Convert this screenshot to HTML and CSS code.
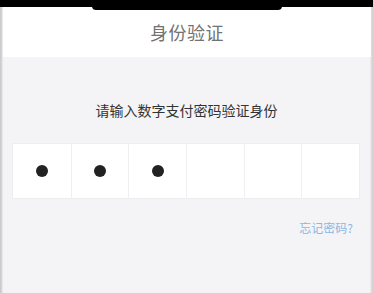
FILE: index.html
```html
<!DOCTYPE html>
<html lang="zh">
<head>
<meta charset="utf-8">
<title>身份验证</title>
<link rel="stylesheet" href="styles.css">
</head>
<body>
<div class="screen">
  <div class="topbar"><div class="notch"></div></div>
  <div class="header"><span class="title">身份验证</span></div>
  <p class="prompt">请输入数字支付密码验证身份</p>
  <div class="pinbox">
    <div class="cell"><span class="dot"></span></div>
    <div class="cell"><span class="dot"></span></div>
    <div class="cell"><span class="dot"></span></div>
    <div class="cell"></div>
    <div class="cell"></div>
    <div class="cell"></div>
  </div>
  <div class="forgot-row"><a class="forgot">忘记密码?</a></div>
</div>
</body>
</html>
```
FILE: styles.css
```css
html, body {
  margin: 0;
  padding: 0;
}
body {
  font-family: "Noto Sans CJK SC", "Noto Sans", sans-serif;
  background: #f4f3f6;
}
.screen {
  position: relative;
  width: 373px;
  height: 293px;
  box-sizing: border-box;
  border-top: 7px solid #000;
  background: #f4f3f6;
  overflow: hidden;
  box-shadow: inset 3px 0 2px -1px rgba(0,0,0,0.18), inset -4px 0 2px -2px rgba(0,0,0,0.14);
}
.topbar {
  position: relative;
  height: 0;
}
.notch {
  position: absolute;
  left: 92px;
  width: 190px;
  top: -1px;
  height: 4px;
  background: #000;
  border-radius: 0 0 8px 8px;
}
.header {
  height: 50px;
  background: #fff;
  display: flex;
  align-items: center;
  justify-content: center;
  margin: 0 2px 0 3px;
}
.title {
  font-size: 18px;
  color: #727272;
  letter-spacing: 0.5px;
}
.prompt {
  margin: 43px 0 0;
  text-align: center;
  font-size: 14px;
  line-height: 20px;
  color: #333;
}
.pinbox {
  margin: 23px 13px 0 12px;
  height: 56px;
  display: grid;
  grid-template-columns: repeat(6, 1fr);
  background: #fff;
  border: 1px solid #ededf0;
  box-sizing: border-box;
}
.cell {
  display: flex;
  align-items: center;
  justify-content: center;
  border-left: 1px solid #f0f0f2;
}
.cell:first-child {
  border-left: none;
}
.dot {
  width: 12px;
  height: 12px;
  border-radius: 50%;
  background: #222;
}
.forgot-row {
  display: flex;
  justify-content: flex-end;
  margin: 20px 20px 0 0;
}
.forgot {
  font-size: 12px;
  line-height: 18px;
  color: #8cb7e2;
}
```
